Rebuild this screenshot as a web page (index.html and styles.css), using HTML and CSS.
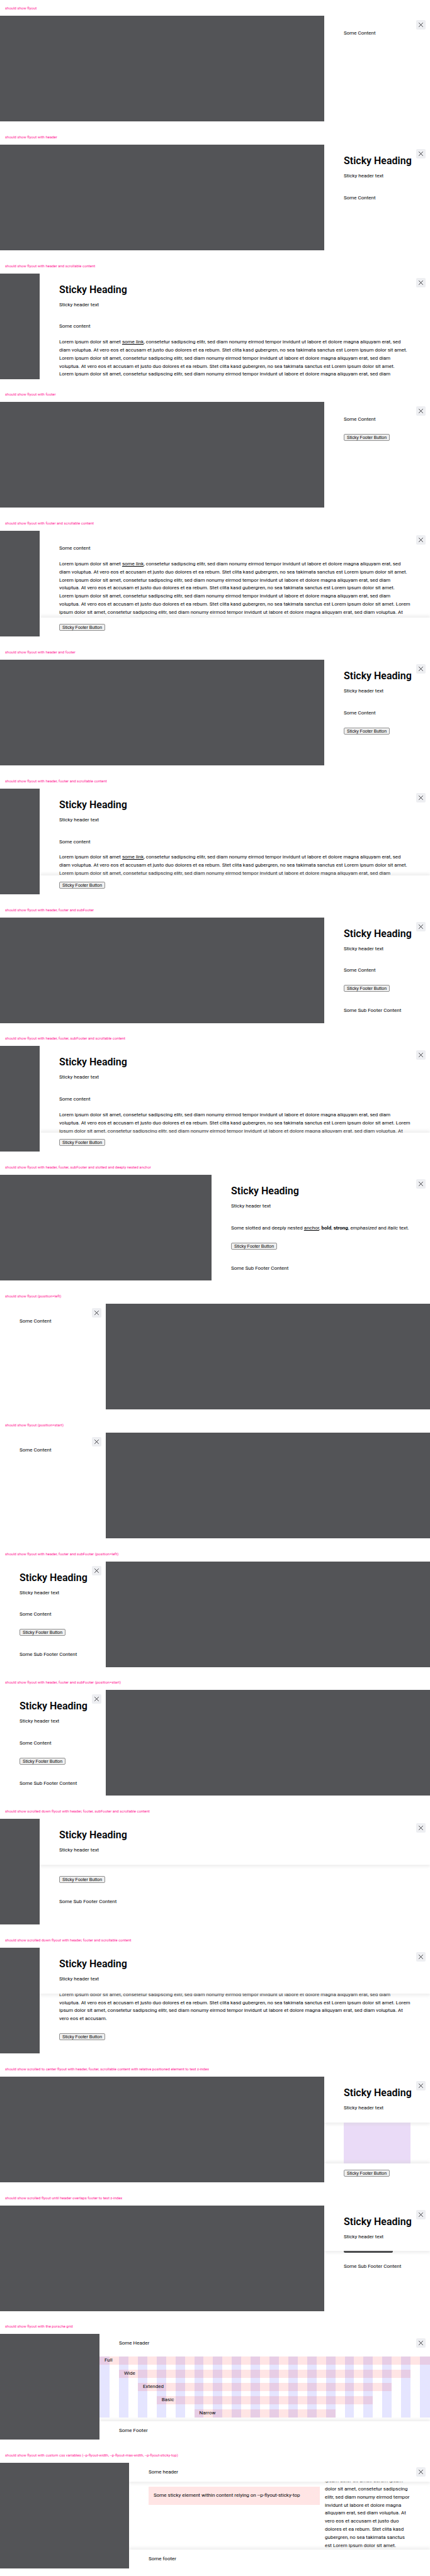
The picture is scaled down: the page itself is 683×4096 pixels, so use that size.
FILE: index.html
```html
<!DOCTYPE html>
<html lang="en">
<head>
<meta charset="utf-8">
<meta name="viewport" content="width=device-width, initial-scale=1">
<title>Flyout states</title>
<link rel="stylesheet" href="styles.css">
</head>
<body class="page">
<svg class="sprite" aria-hidden="true"><symbol id="close" viewBox="0 0 14 14"><path d="M.5.5l13 13M13.5.5l-13 13" fill="none" stroke="#010205" stroke-width="1.5"/></symbol></svg>

<section class="case">
  <h2 class="case__title">should show flyout</h2>
  <div class="backdrop"><div class="flyout">
    <button class="close" type="button" aria-label="Dismiss flyout"><svg class="close__icon"><use href="#close"/></svg></button>
    <div class="content content--first"><p class="text">Some Content</p></div>
  </div></div>
</section>

<section class="case">
  <h2 class="case__title">should show flyout with header</h2>
  <div class="backdrop"><div class="flyout">
    <button class="close" type="button" aria-label="Dismiss flyout"><svg class="close__icon"><use href="#close"/></svg></button>
    <header class="header"><h3 class="heading">Sticky Heading</h3><p class="text">Sticky header text</p></header>
    <div class="content"><p class="text">Some Content</p></div>
  </div></div>
</section>

<section class="case">
  <h2 class="case__title">should show flyout with header and scrollable content</h2>
  <div class="backdrop"><div class="flyout flyout--wide">
    <button class="close" type="button" aria-label="Dismiss flyout"><svg class="close__icon"><use href="#close"/></svg></button>
    <header class="header"><h3 class="heading">Sticky Heading</h3><p class="text">Sticky header text</p></header>
    <div class="content content--clipped">
      <p class="text">Some content</p>
      <p class="text">Lorem ipsum dolor sit amet <a class="link" href="#">some link</a>, consetetur sadipscing elitr, sed diam nonumy eirmod tempor invidunt ut labore et dolore magna aliquyam erat, sed diam voluptua. At vero eos et accusam et justo duo dolores et ea rebum. Stet clita kasd gubergren, no sea takimata sanctus est Lorem ipsum dolor sit amet. Lorem ipsum dolor sit amet, consetetur sadipscing elitr, sed diam nonumy eirmod tempor invidunt ut labore et dolore magna aliquyam erat, sed diam voluptua. At vero eos et accusam et justo duo dolores et ea rebum. Stet clita kasd gubergren, no sea takimata sanctus est Lorem ipsum dolor sit amet.<br>Lorem ipsum dolor sit amet, consetetur sadipscing elitr, sed diam nonumy eirmod tempor invidunt ut labore et dolore magna aliquyam erat, sed diam</p>
    </div>
  </div></div>
</section>

<section class="case">
  <h2 class="case__title">should show flyout with footer</h2>
  <div class="backdrop"><div class="flyout">
    <button class="close" type="button" aria-label="Dismiss flyout"><svg class="close__icon"><use href="#close"/></svg></button>
    <div class="content content--first"><p class="text">Some Content</p></div>
    <footer class="footer"><button class="button" type="button">Sticky Footer Button</button></footer>
  </div></div>
</section>

<section class="case">
  <h2 class="case__title">should show flyout with footer and scrollable content</h2>
  <div class="backdrop"><div class="flyout flyout--wide">
    <button class="close" type="button" aria-label="Dismiss flyout"><svg class="close__icon"><use href="#close"/></svg></button>
    <div class="content content--first content--clipped">
      <p class="text">Some content</p>
      <p class="text">Lorem ipsum dolor sit amet <a class="link" href="#">some link</a>, consetetur sadipscing elitr, sed diam nonumy eirmod tempor invidunt ut labore et dolore magna aliquyam erat, sed diam voluptua. At vero eos et accusam et justo duo dolores et ea rebum. Stet clita kasd gubergren, no sea takimata sanctus est Lorem ipsum dolor sit amet. Lorem ipsum dolor sit amet, consetetur sadipscing elitr, sed diam nonumy eirmod tempor invidunt ut labore et dolore magna aliquyam erat, sed diam voluptua. At vero eos et accusam et justo duo dolores et ea rebum. Stet clita kasd gubergren, no sea takimata sanctus est Lorem ipsum dolor sit amet.<br>Lorem ipsum dolor sit amet, consetetur sadipscing elitr, sed diam nonumy eirmod tempor invidunt ut labore et dolore magna aliquyam erat, sed diam voluptua. At vero eos et accusam et justo duo dolores et ea rebum. Stet clita kasd gubergren, no sea takimata sanctus est Lorem ipsum dolor sit amet. Lorem ipsum dolor sit amet, consetetur sadipscing elitr, sed diam nonumy eirmod tempor invidunt ut labore et dolore magna aliquyam erat, sed diam voluptua. At vero eos et accusam et justo duo dolores et ea rebum. Stet clita kasd gubergren, no sea takimata sanctus est Lorem ipsum dolor</p>
    </div>
    <footer class="footer footer--stuck"><button class="button" type="button">Sticky Footer Button</button></footer>
  </div></div>
</section>

<section class="case">
  <h2 class="case__title">should show flyout with header and footer</h2>
  <div class="backdrop"><div class="flyout">
    <button class="close" type="button" aria-label="Dismiss flyout"><svg class="close__icon"><use href="#close"/></svg></button>
    <header class="header"><h3 class="heading">Sticky Heading</h3><p class="text">Sticky header text</p></header>
    <div class="content"><p class="text">Some Content</p></div>
    <footer class="footer"><button class="button" type="button">Sticky Footer Button</button></footer>
  </div></div>
</section>

<section class="case">
  <h2 class="case__title">should show flyout with header, footer and scrollable content</h2>
  <div class="backdrop"><div class="flyout flyout--wide">
    <button class="close" type="button" aria-label="Dismiss flyout"><svg class="close__icon"><use href="#close"/></svg></button>
    <header class="header"><h3 class="heading">Sticky Heading</h3><p class="text">Sticky header text</p></header>
    <div class="content content--clipped">
      <p class="text">Some content</p>
      <p class="text">Lorem ipsum dolor sit amet <a class="link" href="#">some link</a>, consetetur sadipscing elitr, sed diam nonumy eirmod tempor invidunt ut labore et dolore magna aliquyam erat, sed diam voluptua. At vero eos et accusam et justo duo dolores et ea rebum. Stet clita kasd gubergren, no sea takimata sanctus est Lorem ipsum dolor sit amet. Lorem ipsum dolor sit amet, consetetur sadipscing elitr, sed diam nonumy eirmod tempor invidunt ut labore et dolore magna aliquyam erat, sed diam</p>
    </div>
    <footer class="footer footer--stuck"><button class="button" type="button">Sticky Footer Button</button></footer>
  </div></div>
</section>

<section class="case">
  <h2 class="case__title">should show flyout with header, footer and subFooter</h2>
  <div class="backdrop"><div class="flyout">
    <button class="close" type="button" aria-label="Dismiss flyout"><svg class="close__icon"><use href="#close"/></svg></button>
    <header class="header"><h3 class="heading">Sticky Heading</h3><p class="text">Sticky header text</p></header>
    <div class="content"><p class="text">Some Content</p></div>
    <footer class="footer"><button class="button" type="button">Sticky Footer Button</button></footer>
    <div class="subfooter"><p class="text">Some Sub Footer Content</p></div>
  </div></div>
</section>

<section class="case">
  <h2 class="case__title">should show flyout with header, footer, subFooter and scrollable content</h2>
  <div class="backdrop"><div class="flyout flyout--wide">
    <button class="close" type="button" aria-label="Dismiss flyout"><svg class="close__icon"><use href="#close"/></svg></button>
    <header class="header"><h3 class="heading">Sticky Heading</h3><p class="text">Sticky header text</p></header>
    <div class="content content--clipped">
      <p class="text">Some content</p>
      <p class="text">Lorem ipsum dolor sit amet, consetetur sadipscing elitr, sed diam nonumy eirmod tempor invidunt ut labore et dolore magna aliquyam erat, sed diam voluptua. At vero eos et accusam et justo duo dolores et ea rebum. Stet clita kasd gubergren, no sea takimata sanctus est Lorem ipsum dolor sit amet. Lorem ipsum dolor sit amet, consetetur sadipscing elitr, sed diam nonumy eirmod tempor invidunt ut labore et dolore magna aliquyam erat, sed diam voluptua. At</p>
    </div>
    <footer class="footer footer--stuck"><button class="button" type="button">Sticky Footer Button</button></footer>
  </div></div>
</section>

<section class="case">
  <h2 class="case__title">should show flyout with header, footer, subFooter and slotted and deeply nested anchor</h2>
  <div class="backdrop"><div class="flyout flyout--medium">
    <button class="close" type="button" aria-label="Dismiss flyout"><svg class="close__icon"><use href="#close"/></svg></button>
    <header class="header"><h3 class="heading">Sticky Heading</h3><p class="text">Sticky header text</p></header>
    <div class="content"><p class="text">Some slotted and deeply nested <a class="link" href="#">anchor</a>, <b>bold</b>, <strong>strong</strong>, <em>emphasized</em> and <i>italic</i> text.</p></div>
    <footer class="footer"><button class="button" type="button">Sticky Footer Button</button></footer>
    <div class="subfooter"><p class="text">Some Sub Footer Content</p></div>
  </div></div>
</section>

<section class="case">
  <h2 class="case__title">should show flyout (position=left)</h2>
  <div class="backdrop backdrop--start"><div class="flyout">
    <button class="close" type="button" aria-label="Dismiss flyout"><svg class="close__icon"><use href="#close"/></svg></button>
    <div class="content content--first"><p class="text">Some Content</p></div>
  </div></div>
</section>

<section class="case">
  <h2 class="case__title">should show flyout (position=start)</h2>
  <div class="backdrop backdrop--start"><div class="flyout">
    <button class="close" type="button" aria-label="Dismiss flyout"><svg class="close__icon"><use href="#close"/></svg></button>
    <div class="content content--first"><p class="text">Some Content</p></div>
  </div></div>
</section>

<section class="case">
  <h2 class="case__title">should show flyout with header, footer and subFooter (position=left)</h2>
  <div class="backdrop backdrop--start"><div class="flyout">
    <button class="close" type="button" aria-label="Dismiss flyout"><svg class="close__icon"><use href="#close"/></svg></button>
    <header class="header"><h3 class="heading">Sticky Heading</h3><p class="text">Sticky header text</p></header>
    <div class="content"><p class="text">Some Content</p></div>
    <footer class="footer"><button class="button" type="button">Sticky Footer Button</button></footer>
    <div class="subfooter"><p class="text">Some Sub Footer Content</p></div>
  </div></div>
</section>

<section class="case">
  <h2 class="case__title">should show flyout with header, footer and subFooter (position=start)</h2>
  <div class="backdrop backdrop--start"><div class="flyout">
    <button class="close" type="button" aria-label="Dismiss flyout"><svg class="close__icon"><use href="#close"/></svg></button>
    <header class="header"><h3 class="heading">Sticky Heading</h3><p class="text">Sticky header text</p></header>
    <div class="content"><p class="text">Some Content</p></div>
    <footer class="footer"><button class="button" type="button">Sticky Footer Button</button></footer>
    <div class="subfooter"><p class="text">Some Sub Footer Content</p></div>
  </div></div>
</section>

<section class="case">
  <h2 class="case__title">should show scrolled down flyout with header, footer, subFooter and scrollable content</h2>
  <div class="backdrop"><div class="flyout flyout--wide">
    <button class="close" type="button" aria-label="Dismiss flyout"><svg class="close__icon"><use href="#close"/></svg></button>
    <header class="header header--stuck"><h3 class="heading">Sticky Heading</h3><p class="text">Sticky header text</p></header>
    <div class="scrolled scrolled--subfooter">
      <footer class="footer"><button class="button" type="button">Sticky Footer Button</button></footer>
      <div class="subfooter"><p class="text">Some Sub Footer Content</p></div>
    </div>
  </div></div>
</section>

<section class="case">
  <h2 class="case__title">should show scrolled down flyout with header, footer and scrollable content</h2>
  <div class="backdrop"><div class="flyout flyout--wide">
    <button class="close" type="button" aria-label="Dismiss flyout"><svg class="close__icon"><use href="#close"/></svg></button>
    <header class="header header--stuck"><h3 class="heading">Sticky Heading</h3><p class="text">Sticky header text</p></header>
    <div class="scrolled scrolled--footer">
      <div class="content"><p class="text">Lorem ipsum dolor sit amet, consetetur sadipscing elitr, sed diam nonumy eirmod tempor invidunt ut labore et dolore magna aliquyam erat, sed diam voluptua. At vero eos et accusam et justo duo dolores et ea rebum. Stet clita kasd gubergren, no sea takimata sanctus est Lorem ipsum dolor sit amet. Lorem ipsum dolor sit amet, consetetur sadipscing elitr, sed diam nonumy eirmod tempor invidunt ut labore et dolore magna aliquyam erat, sed diam voluptua. At vero eos et accusam.</p></div>
      <footer class="footer"><button class="button" type="button">Sticky Footer Button</button></footer>
    </div>
  </div></div>
</section>

<section class="case">
  <h2 class="case__title">should show scrolled to center flyout with header, footer, scrollable content with relative positioned element to test z-index</h2>
  <div class="backdrop"><div class="flyout">
    <button class="close" type="button" aria-label="Dismiss flyout"><svg class="close__icon"><use href="#close"/></svg></button>
    <header class="header header--stuck"><h3 class="heading">Sticky Heading</h3><p class="text">Sticky header text</p></header>
    <div class="block-area"><div class="block"></div></div>
    <footer class="footer footer--stuck"><button class="button" type="button">Sticky Footer Button</button></footer>
  </div></div>
</section>

<section class="case">
  <h2 class="case__title">should show scrolled flyout until header overlaps footer to test z-index</h2>
  <div class="backdrop"><div class="flyout">
    <button class="close" type="button" aria-label="Dismiss flyout"><svg class="close__icon"><use href="#close"/></svg></button>
    <header class="header header--stuck"><h3 class="heading">Sticky Heading</h3><p class="text">Sticky header text</p></header>
    <div class="scrolled scrolled--overlap">
      <div class="overlap"><div class="overlap__bar"></div></div>
      <div class="subfooter"><p class="text">Some Sub Footer Content</p></div>
    </div>
  </div></div>
</section>

<section class="case">
  <h2 class="case__title">should show flyout with the porsche grid</h2>
  <div class="backdrop"><div class="flyout flyout--grid">
    <button class="close" type="button" aria-label="Dismiss flyout"><svg class="close__icon"><use href="#close"/></svg></button>
    <header class="header header--compact"><p class="text">Some Header</p></header>
    <div class="grid">
      <div class="column"></div><div class="column"></div><div class="column"></div><div class="column"></div><div class="column"></div><div class="column"></div>
      <div class="column"></div><div class="column"></div><div class="column"></div><div class="column"></div><div class="column"></div><div class="column"></div>
      <div class="column"></div><div class="column"></div><div class="column"></div><div class="column"></div><div class="column"></div><div class="column"></div>
      <p class="range range--full">Full</p>
      <p class="range range--wide">Wide</p>
      <p class="range range--extended">Extended</p>
      <p class="range range--basic">Basic</p>
      <p class="range range--narrow">Narrow</p>
    </div>
    <footer class="footer footer--stuck footer--compact"><p class="text">Some Footer</p></footer>
  </div></div>
</section>

<section class="case">
  <h2 class="case__title">should show flyout with custom css variables (--p-flyout-width, --p-flyout-max-width, --p-flyout-sticky-top)</h2>
  <div class="backdrop"><div class="flyout flyout--custom">
    <button class="close" type="button" aria-label="Dismiss flyout"><svg class="close__icon"><use href="#close"/></svg></button>
    <header class="header header--compact header--stuck"><p class="text">Some header</p></header>
    <div class="split">
      <p class="notice">Some sticky element within content relying on --p-flyout-sticky-top</p>
      <div class="split__text"><p class="text">ipsum dolor sit amet. Lorem ipsum dolor sit amet, consetetur sadipscing elitr, sed diam nonumy eirmod tempor invidunt ut labore et dolore magna aliquyam erat, sed diam voluptua. At vero eos et accusam et justo duo dolores et ea rebum. Stet clita kasd gubergren, no sea takimata sanctus est Lorem ipsum dolor sit amet.</p></div>
    </div>
    <footer class="footer footer--stuck footer--compact"><p class="text">Some footer</p></footer>
  </div></div>
</section>
</body>
</html>
```
FILE: styles.css
```css
*, *::before, *::after { box-sizing: border-box; }

.page {
  display: grid;
  grid-auto-rows: 1fr;
  min-height: 100vh;
  margin: 0;
  background: #fff;
  color: #010205;
  font: 8px/1.6 Roboto, "Liberation Sans", sans-serif;
}

.sprite { position: absolute; width: 0; height: 0; }

/* One test case: title, then the stage */
.case {
  display: grid;
  grid-template-rows: 25px 168px;
  align-content: start;
  min-width: 0;
}
.case__title {
  margin: 0;
  padding-left: 8px;
  color: #ff1493;
  font-size: 6px;
  font-weight: 400;
  line-height: 25px;
  white-space: nowrap;
}

.backdrop {
  display: flex;
  justify-content: flex-end;
  min-height: 0;
  background: #535457;
}
.backdrop--start { justify-content: flex-start; }

.flyout {
  position: relative;
  display: flex;
  flex-direction: column;
  width: 168px;
  max-width: 100%;
  min-height: 0;
  overflow: hidden;
  background: #fff;
}
.flyout--wide { width: auto; margin-left: 63px; flex: 1; }
.flyout--medium { width: 347px; }
.flyout--grid { width: 525px; }
.flyout--custom { width: 478px; }

.close {
  position: absolute;
  top: 7px;
  right: 7px;
  z-index: 3;
  display: grid;
  place-items: center;
  width: 15px;
  height: 15px;
  padding: 0;
  border: 0;
  border-radius: 2px;
  background: #eeeff2;
}
.close__icon { width: 7px; height: 7px; }

.text { margin: 0; }
.link { color: inherit; text-decoration: underline; }

.header {
  flex: none;
  display: grid;
  gap: 8px;
  padding: 16px 31px;
  background: #fff;
}
.header--stuck { position: relative; z-index: 2; box-shadow: 0 3px 5px rgba(204, 204, 204, .35); }
.header--compact { padding: 9px 31px 8px; }
.heading {
  margin: 0;
  font-size: 16px;
  font-weight: 600;
  line-height: 20px;
  white-space: nowrap;
}

.content {
  flex: none;
  display: grid;
  gap: 12px;
  padding: 6px 31px;
}
.content--first { padding-top: 22px; }
.content--clipped {
  flex: 0 1 auto;
  align-content: start;
  min-height: 0;
  overflow: hidden;
  padding-bottom: 0;
}

.footer {
  flex: none;
  display: flex;
  padding: 10px 31px;
  background: #fff;
}
.footer--stuck {
  position: relative;
  z-index: 1;
  margin-top: auto;
  padding-bottom: 9px;
  box-shadow: 0 -3px 5px rgba(204, 204, 204, .35);
}
.footer--compact { padding: 9px 31px 8px; }

.button {
  height: 11px;
  padding: 0 4px;
  border: 1px solid #8f8f8f;
  border-radius: 2px;
  background: #efefef;
  color: #000;
  font: 7px/9px "Liberation Sans", Arial, sans-serif;
  white-space: nowrap;
}

.subfooter { flex: none; padding: 14px 31px; }

/* Scroll area resting at its lower end */
.scrolled {
  flex: 1;
  display: flex;
  flex-direction: column;
  justify-content: flex-end;
  min-height: 0;
  overflow: hidden;
}
.scrolled--subfooter { padding-bottom: 15px; }
.scrolled--footer { padding-bottom: 11px; }
.scrolled--overlap { justify-content: flex-start; }

.block-area { flex: 1; display: grid; padding: 0 31px; }
.block { background: #eadbf7; }

.overlap { padding: 0 31px 2px; }
.overlap__bar {
  width: 78px;
  height: 3px;
  border-radius: 0 0 2px 2px;
  background: #212225;
}

.grid {
  display: grid;
  grid-template-columns: 16px repeat(16, minmax(0, 1fr)) 16px;
  grid-template-rows: repeat(5, 13px);
  gap: 8px 15px;
  padding-top: 6px;
}
.column { grid-row: 1 / -1; background: #e5e5ff; }
.column:nth-child(1) { grid-column: 1; }
.column:nth-child(2) { grid-column: 2; }
.column:nth-child(3) { grid-column: 3; }
.column:nth-child(4) { grid-column: 4; }
.column:nth-child(5) { grid-column: 5; }
.column:nth-child(6) { grid-column: 6; }
.column:nth-child(7) { grid-column: 7; }
.column:nth-child(8) { grid-column: 8; }
.column:nth-child(9) { grid-column: 9; }
.column:nth-child(10) { grid-column: 10; }
.column:nth-child(11) { grid-column: 11; }
.column:nth-child(12) { grid-column: 12; }
.column:nth-child(13) { grid-column: 13; }
.column:nth-child(14) { grid-column: 14; }
.column:nth-child(15) { grid-column: 15; }
.column:nth-child(16) { grid-column: 16; }
.column:nth-child(17) { grid-column: 17; }
.column:nth-child(18) { grid-column: 18; }
.range { margin: 0; padding-left: 8px; background: rgba(255, 0, 0, .1); }
.range--full { grid-area: 1 / 1 / 2 / -1; }
.range--wide { grid-area: 2 / 2 / 3 / -2; }
.range--extended { grid-area: 3 / 3 / 4 / -3; }
.range--basic { grid-area: 4 / 4 / 5 / -4; }
.range--narrow { grid-area: 5 / 6 / 6 / -6; }

.split {
  flex: 1;
  display: grid;
  grid-template-columns: 2fr 1fr;
  grid-template-rows: minmax(0, 1fr);
  gap: 8px;
  min-height: 0;
  overflow: hidden;
  padding: 0 31px;
}
.split__text {
  display: flex;
  flex-direction: column;
  justify-content: flex-end;
}
.notice {
  align-self: start;
  margin: 8px 0 0;
  padding: 8px;
  background: #ffe5e5;
}
```
